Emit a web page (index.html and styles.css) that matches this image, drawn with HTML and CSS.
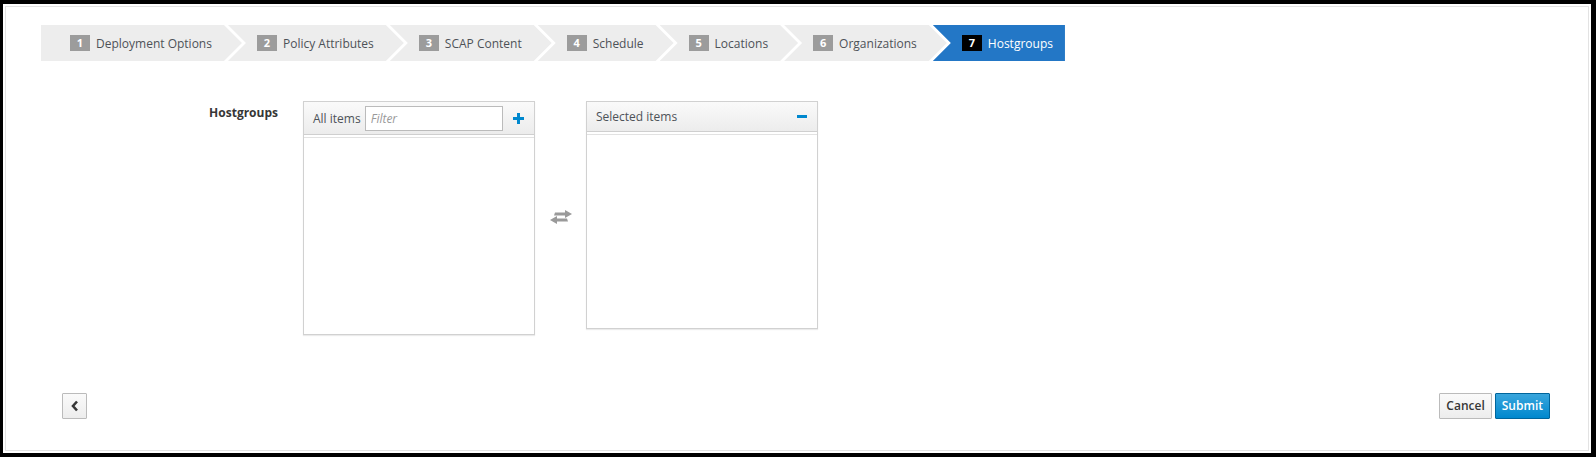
FILE: index.html
```html
<!DOCTYPE html>
<html lang="en">
<head>
  <meta charset="UTF-8">
  <meta name="viewport" content="width=device-width, initial-scale=1.0">
  <title>New Compliance Policy - Hostgroups</title>
  <link rel="stylesheet" href="styles.css">
</head>
<body>
  <div class="frame">
    <div class="panel">
      <!-- Wizard steps -->
      <ul class="steps">
        <li class="step"><span class="num">1</span>Deployment Options</li>
        <li class="step"><span class="num">2</span>Policy Attributes</li>
        <li class="step"><span class="num">3</span>SCAP Content</li>
        <li class="step"><span class="num">4</span>Schedule</li>
        <li class="step"><span class="num">5</span>Locations</li>
        <li class="step"><span class="num">6</span>Organizations</li>
        <li class="step active"><span class="num">7</span>Hostgroups</li>
      </ul>

      <!-- Hostgroups dual list -->
      <div class="form-row">
        <label class="field-label">Hostgroups</label>
        <div class="duallist">
          <div class="list-box all">
            <div class="list-head">
              <span class="list-title">All items</span>
              <input class="filter" type="text" placeholder="Filter">
              <svg class="icon-plus" width="11" height="11" viewBox="0 0 11 11">
                <rect x="4" y="0" width="3" height="11"/>
                <rect x="0" y="4" width="11" height="3"/>
              </svg>
            </div>
            <div class="list-body"></div>
          </div>

          <div class="transfer">
            <svg width="24" height="14" viewBox="0 0 24 14">
              <polygon points="6,2.5 16,2.5 16,0 23,4 16,8 16,5.5 5,5.5"/>
              <polygon points="18,8.5 8,8.5 8,6 1,10 8,14 8,11.5 19,11.5"/>
            </svg>
          </div>

          <div class="list-box selected">
            <div class="list-head">
              <span class="list-title">Selected items</span>
              <svg class="icon-minus" width="10" height="3" viewBox="0 0 10 3">
                <rect x="0" y="0" width="10" height="3"/>
              </svg>
            </div>
            <div class="list-body"></div>
          </div>
        </div>
      </div>

      <!-- Wizard buttons -->
      <div class="actions">
        <button class="btn back">
          <svg width="8" height="12" viewBox="0 0 8 12">
            <path d="M6 1.5 L2 6 L6 10.5" fill="none" stroke="#363636" stroke-width="2.6"/>
          </svg>
        </button>
        <div class="actions-right">
          <button class="btn">Cancel</button>
          <button class="btn primary">Submit</button>
        </div>
      </div>
    </div>
  </div>
</body>
</html>
```

FILE: styles.css
```css
html, body {
  height: 457px;
}
body {
  margin: 0;
  box-sizing: border-box;
  padding: 4px 5px 4px 3px;
  background: #000;
  font-family: 'Open Sans', 'Liberation Sans', sans-serif;
  font-size: 12px;
  color: #363636;
}
.frame {
  height: 100%;
  box-sizing: border-box;
  padding: 2px;
  background: #fff;
}
.panel {
  height: 100%;
  box-sizing: border-box;
  border: 1px solid #e3e3e3;
  padding-top: 18px;
}

/* Wizard steps */
.steps {
  display: flex;
  list-style: none;
  margin: 0 0 0 35px;
  padding: 0;
}
.step {
  display: flex;
  align-items: center;
  height: 36px;
  padding: 0 30px 0 29px;
  margin-left: -14px;
  background: #ededed;
  color: #4d5258;
  white-space: nowrap;
  clip-path: polygon(0 0, calc(100% - 18px) 0, 100% 50%, calc(100% - 18px) 100%, 0 100%, 18px 50%);
}
.step:first-child {
  margin-left: 0;
  clip-path: polygon(0 0, calc(100% - 18px) 0, 100% 50%, calc(100% - 18px) 100%, 0 100%);
}
.step.active {
  padding-right: 12px;
  background: #2377c6;
  color: #fff;
  clip-path: polygon(0 0, 100% 0, 100% 100%, 0 100%, 18px 50%);
}
.num {
  display: inline-block;
  width: 20px;
  height: 16px;
  line-height: 16px;
  margin-right: 6px;
  background: #9c9c9c;
  color: #fff;
  font-size: 11px;
  font-weight: 700;
  text-align: center;
}
.step.active .num {
  background: #000;
}

/* Form */
.form-row {
  display: flex;
  margin-top: 40px;
}
.field-label {
  width: 272px;
  margin-right: 25px;
  padding-top: 3px;
  line-height: 18px;
  text-align: right;
  font-weight: 700;
  color: #363636;
}
.duallist {
  display: flex;
  align-items: flex-start;
}
.list-box {
  display: flex;
  flex-direction: column;
  width: 232px;
  box-sizing: border-box;
  border: 1px solid #d1d1d1;
  box-shadow: 0 1px 1px rgba(0, 0, 0, 0.08);
}
.list-box.all {
  height: 234px;
}
.list-box.selected {
  height: 228px;
}
.list-head {
  display: flex;
  align-items: center;
  height: 33px;
  box-sizing: border-box;
  padding: 0 10px 0 9px;
  background: linear-gradient(#fafafa, #ececec);
  border-bottom: 1px solid #cfcfcf;
}
.selected .list-head {
  height: 30px;
}
.list-title {
  color: #4d5258;
}
.selected .list-title {
  flex: 1;
}
.filter {
  width: 138px;
  height: 25px;
  box-sizing: border-box;
  margin: 0 10px 0 4px;
  padding: 0 5px;
  border: 1px solid #bbb;
  font-family: inherit;
  font-size: 12px;
}
.filter::placeholder {
  color: #999;
  font-style: italic;
}
.icon-plus, .icon-minus {
  fill: #0088ce;
}
.list-body {
  flex: 1;
  border-top: 1px solid #e2e2e2;
  margin-top: 2px;
  background: #fff;
}
.transfer {
  display: flex;
  justify-content: center;
  align-items: center;
  width: 51px;
  height: 232px;
  fill: #9a9a9a;
}

/* Buttons */
.actions {
  display: flex;
  justify-content: space-between;
  align-items: center;
  margin: 58px 38px 0 56px;
}
.btn {
  height: 26px;
  box-sizing: border-box;
  padding: 0 6px;
  border: 1px solid #bbb;
  border-radius: 1px;
  background: linear-gradient(#fafafa, #ededed);
  color: #363636;
  font-family: inherit;
  font-size: 12px;
  font-weight: 600;
  line-height: 24px;
  cursor: pointer;
}
.btn.back {
  display: flex;
  align-items: center;
  justify-content: center;
  width: 25px;
  padding: 0;
}
.actions-right {
  display: flex;
  gap: 3px;
}
.btn.primary {
  background: linear-gradient(#39a5dc, #0088ce);
  border-color: #00659c;
  color: #fff;
}
```
